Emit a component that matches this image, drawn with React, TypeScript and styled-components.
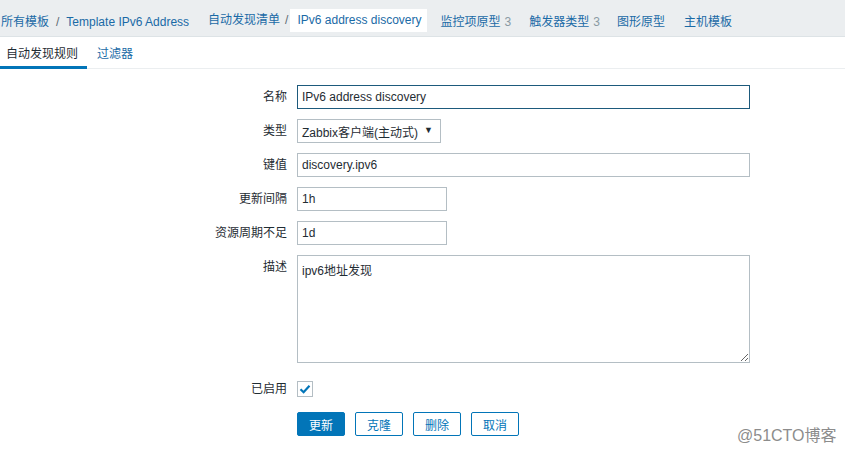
import React from "react";
import styled, { createGlobalStyle } from "styled-components";

const BLUE = "#0275b8";
const LINK = "#1a6aa6";
const TEXT = "#1f2c33";

const Global = createGlobalStyle`
  html, body { margin: 0; padding: 0; background: #fff; }
  body {
    font-family: "Liberation Sans", Arial, "Noto Sans CJK SC", sans-serif;
    font-size: 12px;
    color: ${TEXT};
  }
  * { box-sizing: border-box; }
`;

const Page = styled.div`
  position: relative;
  width: 845px;
  height: 449px;
  overflow: hidden;
  background: #fff;
`;

const Header = styled.nav`
  display: flex;
  align-items: center;
  height: 37px;
  padding-left: 1px;
  padding-top: 5px;
  background: #ebeef0;
  border-bottom: 1px solid #dde3e6;
  white-space: nowrap;
`;

const Crumbs = styled.div<{ $gap?: number }>`
  display: flex;
  align-items: baseline;
  margin-left: ${(p) => p.$gap ?? 0}px;
`;

const NavLink = styled.span`
  color: ${LINK};
`;

const Sep = styled.span<{ $l: number; $r: number }>`
  color: #5b6a72;
  margin: 0 ${(p) => p.$r}px 0 ${(p) => p.$l}px;
`;

const ActiveCrumb = styled.span`
  display: inline-block;
  line-height: 23px;
  padding: 0 5px 0 7px;
  background: #fff;
  color: ${LINK};
`;

const Count = styled.span`
  color: #8a9aa3;
  margin-left: 4px;
`;

const TabBar = styled.div`
  display: flex;
  height: 32px;
  border-bottom: 1px solid #ebeef0;
`;

const Tab = styled.div<{ $active?: boolean; $first?: boolean }>`
  display: flex;
  align-items: center;
  height: 32px;
  padding: 2px 9px 0 ${(p) => (p.$first ? 6 : 10)}px;
  border-bottom: 3px solid ${(p) => (p.$active ? BLUE : "transparent")};
  color: ${(p) => (p.$active ? TEXT : LINK)};
`;

const Form = styled.div`
  display: grid;
  grid-template-columns: 287px 453px;
  column-gap: 10px;
  row-gap: 10px;
  align-items: start;
  padding-top: 16px;
`;

const Label = styled.label<{ $pad?: number }>`
  text-align: right;
  line-height: 24px;
  padding-top: ${(p) => p.$pad ?? 0}px;
  white-space: nowrap;
  color: ${TEXT};
`;

const TextInput = styled.input<{ $w: number; $focus?: boolean }>`
  display: block;
  width: ${(p) => p.$w}px;
  height: 24px;
  margin: 0;
  padding: 0 4px;
  border: 1px solid ${(p) => (p.$focus ? "#1d5a7c" : "#b4bec4")};
  border-radius: 0;
  background: #fff;
  font: inherit;
  color: ${TEXT};
  outline: none;
`;

const SelectBox = styled.div`
  display: flex;
  align-items: center;
  justify-content: space-between;
  width: 144px;
  height: 24px;
  padding: 0 7px 0 4px;
  border: 1px solid #b4bec4;
  background: #fff;
  color: ${TEXT};
  white-space: nowrap;
`;

const Caret = styled.span`
  font-size: 9px;
  color: #1f2c33;
  margin-top: -2px;
`;

const TextArea = styled.textarea`
  display: block;
  width: 453px;
  height: 108px;
  margin: 0;
  padding: 5px 4px;
  border: 1px solid #b4bec4;
  border-radius: 0;
  font: inherit;
  color: ${TEXT};
  background: #fff;
  outline: none;
  resize: both;
`;

const Check = styled.span`
  display: flex;
  align-items: center;
  justify-content: center;
  width: 16px;
  height: 16px;
  margin-top: 8px;
  border: 1px solid #b4bec4;
  background: #fff;
`;

const ButtonRow = styled.div`
  grid-column: 2;
  display: flex;
  gap: 10px;
  margin-top: 1px;
`;

const Button = styled.button<{ $primary?: boolean }>`
  height: 24px;
  padding: 0 11px;
  border: 1px solid ${BLUE};
  border-radius: 2px;
  background: ${(p) => (p.$primary ? BLUE : "#fff")};
  color: ${(p) => (p.$primary ? "#fff" : BLUE)};
  font: inherit;
  cursor: pointer;
`;

const Watermark = styled.div`
  position: absolute;
  left: 737px;
  top: 422px;
  font-size: 16px;
  color: #8c8c8c;
  white-space: nowrap;
`;

export default function App() {
  return (
    <Page>
      <Global />
      <Header>
        <Crumbs>
          <NavLink>所有模板</NavLink>
          <Sep $l={7} $r={7}>/</Sep>
          <NavLink>Template IPv6 Address</NavLink>
        </Crumbs>
        <Crumbs $gap={19}>
          <NavLink>自动发现清单</NavLink>
          <Sep $l={5} $r={2}>/</Sep>
          <ActiveCrumb>IPv6 address discovery</ActiveCrumb>
        </Crumbs>
        <Crumbs $gap={14}>
          <NavLink>监控项原型</NavLink>
          <Count>3</Count>
        </Crumbs>
        <Crumbs $gap={18}>
          <NavLink>触发器类型</NavLink>
          <Count>3</Count>
        </Crumbs>
        <Crumbs $gap={17}>
          <NavLink>图形原型</NavLink>
        </Crumbs>
        <Crumbs $gap={19}>
          <NavLink>主机模板</NavLink>
        </Crumbs>
      </Header>

      <TabBar>
        <Tab $active $first>
          自动发现规则
        </Tab>
        <Tab>过滤器</Tab>
      </TabBar>

      <Form>
        <Label>名称</Label>
        <TextInput $w={453} $focus defaultValue="IPv6 address discovery" />

        <Label>类型</Label>
        <SelectBox>
          <span>Zabbix客户端(主动式)</span>
          <Caret>▼</Caret>
        </SelectBox>

        <Label>键值</Label>
        <TextInput $w={453} defaultValue="discovery.ipv6" />

        <Label>更新间隔</Label>
        <TextInput $w={150} defaultValue="1h" />

        <Label>资源周期不足</Label>
        <TextInput $w={150} defaultValue="1d" />

        <Label>描述</Label>
        <TextArea defaultValue="ipv6地址发现" />

        <Label $pad={4}>已启用</Label>
        <Check>
          <svg width="12" height="10" viewBox="0 0 12 10">
            <path
              d="M1.5 5.2 L4.6 8.2 L10.5 1.8"
              fill="none"
              stroke={BLUE}
              strokeWidth="2.2"
            />
          </svg>
        </Check>

        <ButtonRow>
          <Button $primary>更新</Button>
          <Button>克隆</Button>
          <Button>删除</Button>
          <Button>取消</Button>
        </ButtonRow>
      </Form>

      <Watermark>@51CTO博客</Watermark>
    </Page>
  );
}
